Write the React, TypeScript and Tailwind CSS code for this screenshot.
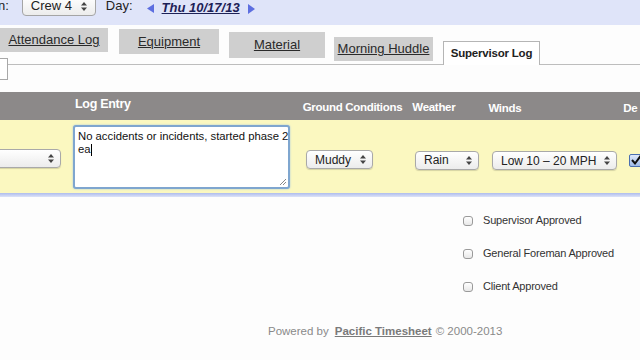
import React from "react";

const font = { fontFamily: '"Liberation Sans", Arial, sans-serif' };

function Arrows() {
  return (
    <svg width="6" height="9" viewBox="0 0 6 9" className="shrink-0">
      <path d="M3 0 L6 3.5 L0 3.5 Z" fill="#444" />
      <path d="M3 9 L6 5.5 L0 5.5 Z" fill="#444" />
    </svg>
  );
}

function Select({ label, w, className = "" }: { label: string; w: string; className?: string }) {
  return (
    <div
      className={`${w} h-[19px] flex items-center justify-between pl-[8px] pr-[6px] rounded-[4px] border border-[#a9a9a9] bg-gradient-to-b from-white to-[#ececec] shadow-[0_1px_1px_rgba(0,0,0,0.15)] text-[12px] text-[#222] shrink-0 whitespace-nowrap ${className}`}
    >
      <span>{label}</span>
      <Arrows />
    </div>
  );
}

function Tab({ label, w, mt, h, active = false }: { label: string; w: string; mt: string; h: string; active?: boolean }) {
  return (
    <div
      className={`${w} ${mt} ${h} shrink-0 flex items-center justify-center whitespace-nowrap ${
        active
          ? "bg-white border border-b-0 border-[#b5b5b5] font-bold text-[11.5px] tracking-[-0.2px] text-[#222]"
          : "bg-[#cfcfcf] text-[13px] text-[#2a2a2a] underline"
      }`}
    >
      {label}
    </div>
  );
}

function Check({ label }: { label: string }) {
  return (
    <div className="flex items-center gap-[10px] h-[33px]">
      <div className="w-[10px] h-[10px] rounded-[3px] border border-[#9a9a9a] bg-gradient-to-b from-white to-[#e8e8e8]" />
      <span className="text-[11px] text-[#333] tracking-[-0.2px]">{label}</span>
    </div>
  );
}

export default function App() {
  return (
    <div className="w-[640px] h-[360px] overflow-hidden bg-[#fdfdfd] relative" style={font}>
      {/* top bar */}
      <div className="h-[25px] bg-[#dfe4f9] overflow-hidden">
        <div className="flex items-center -mt-[5px] h-[22px] text-[13px] text-[#222]">
          <span className="-ml-[2px]">n:</span>
          <div className="ml-[13px] w-[74px] h-[20px] rounded-[4px] border border-[#a5a5a5] bg-gradient-to-b from-white to-[#ececec] flex items-center justify-between px-[8px]">
            <span>Crew 4</span>
            <Arrows />
          </div>
          <span className="ml-[10px]">Day:</span>
          <svg width="7" height="9" viewBox="0 0 7 9" className="ml-[14px] mt-[4px]">
            <path d="M0 4.5 L7 0 L7 9 Z" fill="#5d6ee0" />
          </svg>
          <span className="ml-[8px] mt-[3px] italic font-bold underline text-[#1d2157]">Thu 10/17/13</span>
          <svg width="7" height="10" viewBox="0 0 7 10" className="ml-[8px] mt-[6px]">
            <path d="M7 5 L0 0 L0 10 Z" fill="#5d6ee0" />
          </svg>
        </div>
      </div>

      {/* tabs */}
      <div className="flex items-start border-b border-[#bdbdbd] h-[40px]">
        <Tab label="Attendance Log" w="w-[108px]" mt="mt-[3px]" h="h-[24px]" />
        <div className="w-[11px] shrink-0" />
        <Tab label="Equipment" w="w-[100px]" mt="mt-[4px]" h="h-[25px]" />
        <div className="w-[10px] shrink-0" />
        <Tab label="Material" w="w-[96px]" mt="mt-[7px]" h="h-[26px]" />
        <div className="w-[9px] shrink-0" />
        <Tab label="Morning Huddle" w="w-[99px]" mt="mt-[12px]" h="h-[24px]" />
        <div className="w-[10px] shrink-0" />
        <Tab label="Supervisor Log" w="w-[97px]" mt="mt-[16px]" h="h-[24px]" active />
      </div>

      {/* small input */}
      <div className="h-[34px]">
        <div className="-ml-[10px] -mt-[7px] w-[18px] h-[22px] border border-[#a8a8a8] bg-white" />
      </div>

      {/* header */}
      <div className="h-[28px] bg-[#8c8989] flex items-center text-white font-bold text-[11.5px] tracking-[-0.3px] whitespace-nowrap">
        <span className="ml-[75px] -mt-[4px] text-[12.5px]">Log Entry</span>
        <span className="ml-[172px] mt-[3px]">Ground Conditions</span>
        <span className="ml-[10px] mt-[3px]">Weather</span>
        <span className="ml-[33px] mt-[5px]">Winds</span>
        <span className="ml-[102px] mt-[5px]">De</span>
      </div>

      {/* yellow row */}
      <div className="h-[73px] bg-[#fbf8c0] flex items-center">
        <Select label="" w="w-[80px]" className="-ml-[19px] mt-[4px]" />
        <div className="ml-[12px] w-[217px] h-[64px] rounded-[3px] border-[2px] border-[#7fa6cf] bg-white relative shrink-0 shadow-[0_0_2px_#9cc0e6]">
          <div className="px-[3px] pt-[3px] text-[11.3px] leading-[13px] text-[#111] whitespace-nowrap">
            No accidents or incidents, started phase 2
            <br />
            ea<span className="inline-block w-px h-[12px] bg-black align-middle" />
          </div>
          <svg width="8" height="8" viewBox="0 0 8 8" className="absolute right-[1px] bottom-[1px]">
            <path d="M7 1 L1 7 M7 4 L4 7" stroke="#888" strokeWidth="1" />
          </svg>
        </div>
        <Select label="Muddy" w="w-[67px]" className="ml-[16px] mt-[6px]" />
        <Select label="Rain" w="w-[64px]" className="ml-[42px] mt-[7px]" />
        <Select label="Low 10 – 20 MPH" w="w-[125px]" className="ml-[13px] mt-[8px]" />
        <div className="ml-[12px] mt-[8px] w-[13px] h-[13px] rounded-[2px] border border-[#4a6fb0] bg-gradient-to-b from-[#dfe9fb] to-[#9fbbe8] relative shrink-0">
          <svg width="13" height="13" viewBox="0 0 13 13" className="absolute -top-[2px] left-[0px]">
            <path d="M2 7 L5 10.5 L12 1" stroke="#111" strokeWidth="2" fill="none" />
          </svg>
        </div>
      </div>
      <div className="h-[4px] bg-gradient-to-b from-[#aebcec] to-[#dde3f8]" />

      {/* approvals */}
      <div className="flex flex-col pl-[463px] pt-[7px]">
        <Check label="Supervisor Approved" />
        <Check label="General Foreman Approved" />
        <Check label="Client Approved" />
      </div>

      {/* footer */}
      <div className="pl-[268px] pt-[20px] text-[11.5px] text-[#8a8a8a] flex items-center whitespace-nowrap">
        <span>Powered by</span>
        <span className="ml-[6px] font-bold underline text-[#7a7a7a]">Pacific Timesheet</span>
        <span className="ml-[4px]">© 2000-2013</span>
      </div>
    </div>
  );
}
